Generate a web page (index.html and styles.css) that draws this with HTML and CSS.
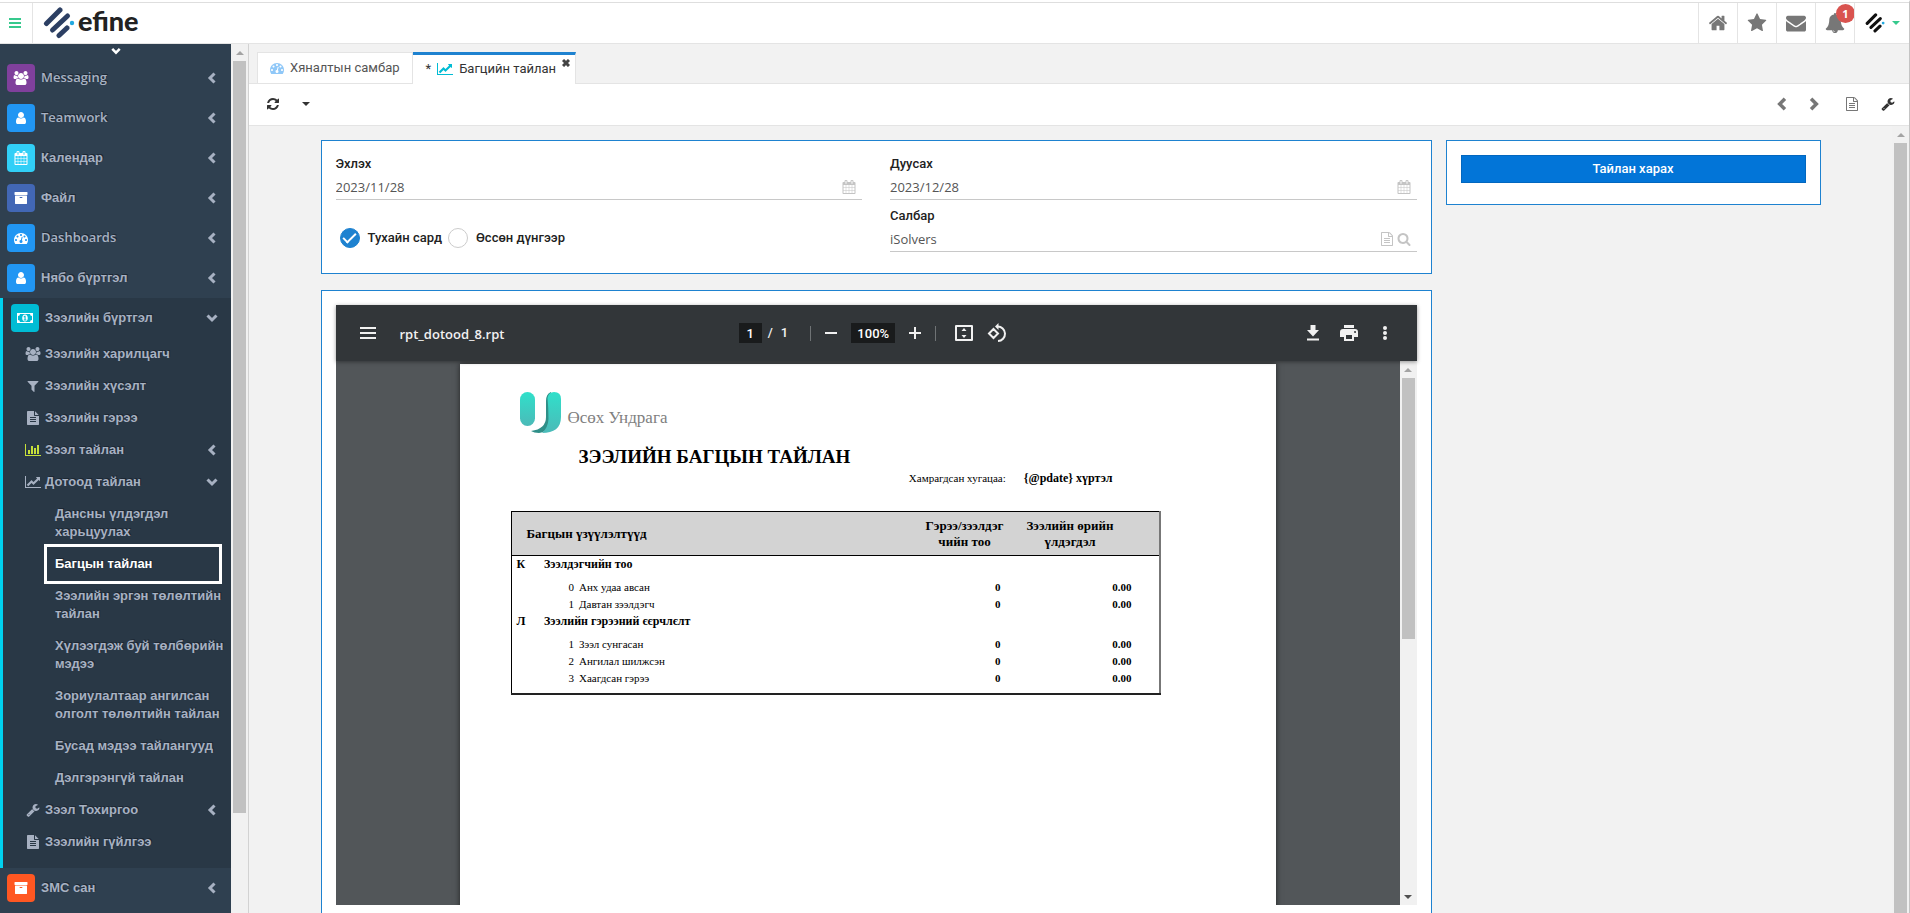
FILE: index.html
```
<!DOCTYPE html>
<html lang="mn">
<head>
<meta charset="utf-8">
<title>efine</title>
<link rel="stylesheet" href="styles.css">
</head>
<body>
<svg class="defs" aria-hidden="true">
  <symbol id="i-users" viewBox="0 0 2048 1792"><path d="M657 896q-162 5-265 128h-134q-82 0-138-40.5t-56-118.5q0-353 124-353 6 0 43.500 21t97.500 42.500 119 21.500q67 0 133-23-5 37-5 66 0 159 90 256zm1071 637q0 120-73 189.500t-194 69.500h-874q-121 0-194-69.500t-73-189.500q0-53 3.500-103.500t14-109 26.500-108.500 43-97.500 62-81 85.500-53.500 111.500-20q10 0 43 21.500t73 48 107 48 135 21.500 135-21.500 107-48 73-48 43-21.500q61 0 111.500 20t85.500 53.500 62 81 43 97.500 26.500 108.500 14 109 3.500 103.500zm-1024-1277q0 106-75 181t-181 75-181-75-75-181 75-181 181-75 181 75 75 181zm704 384q0 159-112.500 271.500t-271.500 112.500-271.500-112.500-112.500-271.500 112.500-271.500 271.500-112.500 271.500 112.500 112.500 271.500zm576 225q0 78-56 118.500t-138 40.500h-134q-103-123-265-128 90-97 90-256 0-29-5-66 66 23 133 23 59 0 119-21.500t97.500-42.500 43.500-21q124 0 124 353zm-128-609q0 106-75 181t-181 75-181-75-75-181 75-181 181-75 181 75 75 181z"/></symbol>
  <symbol id="i-user" viewBox="0 0 1792 1792"><path d="M1536 1399q0 109-62.500 187t-150.500 78h-854q-88 0-150.500-78t-62.500-187q0-85 8.500-160.500t31.500-152 58.500-131 94-89 134.500-34.500q131 128 313 128t313-128q76 0 134.500 34.500t94 89 58.500 131 31.500 152 8.500 160.500zm-256-887q0 159-112.500 271.500t-271.500 112.500-271.500-112.500-112.500-271.500 112.500-271.500 271.500-112.500 271.500 112.500 112.500 271.500z"/></symbol>
  <symbol id="i-calendar" viewBox="0 0 1792 1792"><path d="M192 1664h288v-288h-288v288zm352 0h320v-288h-320v288zm-352-352h288v-320h-288v320zm352 0h320v-320h-320v320zm-352-384h288v-288h-288v288zm736 736h320v-288h-320v288zm-384-736h320v-288h-320v288zm768 736h288v-288h-288v288zm-384-352h320v-320h-320v320zm-352-864v-288q0-13-9.500-22.500t-22.500-9.500h-64q-13 0-22.500 9.500t-9.500 22.500v288q0 13 9.500 22.500t22.500 9.500h64q13 0 22.500-9.500t9.500-22.500zm736 864h288v-320h-288v320zm-384-384h320v-288h-320v288zm384 0h288v-288h-288v288zm32-480v-288q0-13-9.500-22.500t-22.500-9.500h-64q-13 0-22.500 9.500t-9.500 22.500v288q0 13 9.500 22.500t22.500 9.500h64q13 0 22.500-9.500t9.500-22.500zm384-64v1280q0 52-38 90t-90 38h-1408q-52 0-90-38t-38-90v-1280q0-52 38-90t90-38h128v-96q0-66 47-113t113-47h64q66 0 113 47t47 113v96h384v-96q0-66 47-113t113-47h64q66 0 113 47t47 113v96h128q52 0 90 38t38 90z"/></symbol>
  <symbol id="i-archive" viewBox="0 0 1792 1792"><path d="M1088 832q0-26-19-45t-45-19h-256q-26 0-45 19t-19 45 19 45 45 19h256q26 0 45-19t19-45zm576-192v960q0 26-19 45t-45 19h-1408q-26 0-45-19t-19-45v-960q0-26 19-45t45-19h1408q26 0 45 19t19 45zm64-448v256q0 26-19 45t-45 19h-1536q-26 0-45-19t-19-45v-256q0-26 19-45t45-19h1536q26 0 45 19t19 45z"/></symbol>
  <symbol id="i-dash" viewBox="0 0 1792 1792"><path d="M384 1152q0-53-37.500-90.500t-90.500-37.500-90.500 37.500-37.500 90.500 37.500 90.500 90.500 37.500 90.500-37.500 37.500-90.500zm192-448q0-53-37.500-90.500t-90.500-37.500-90.500 37.500-37.500 90.500 37.500 90.500 90.500 37.500 90.500-37.500 37.500-90.500zm428 481l101-382q6-26-7.500-48.500t-38.500-29.500-48 6.500-30 39.500l-101 382q-60 5-107 43.500t-63 98.500q-20 77 20 146t117 89 146-20 89-117q16-60-6-117t-72-91zm660-33q0-53-37.500-90.500t-90.500-37.500-90.500 37.500-37.500 90.500 37.500 90.500 90.500 37.500 90.500-37.500 37.500-90.500zm-640-640q0-53-37.500-90.500t-90.500-37.500-90.500 37.500-37.500 90.500 37.500 90.500 90.500 37.500 90.500-37.500 37.500-90.500zm448 192q0-53-37.500-90.500t-90.500-37.500-90.500 37.500-37.500 90.500 37.500 90.500 90.500 37.500 90.500-37.500 37.500-90.500zm320 448q0 261-141 483-19 29-54 29h-1402q-35 0-54-29-141-221-141-483 0-182 71-348t191-286 286-191 348-71 348 71 286 191 191 286 71 348z"/></symbol>
  <symbol id="i-money" viewBox="0 0 16 14"><path fill-rule="evenodd" d="M0 2h16v10H0zM3 3a2 2 0 0 1-2 2v4a2 2 0 0 1 2 2h10a2 2 0 0 1 2-2V5a2 2 0 0 1-2-2z"/><path fill-rule="evenodd" d="M8 3.400c1.700 0 2.800 1.500 2.800 3.600s-1.100 3.600-2.800 3.600S5.200 9.100 5.200 7 6.300 3.400 8 3.400zM7.600 4.800 6.500 5.700l.5.700.5-.3v2.400h-.8v.9h2.700v-.9h-.8V4.800z"/></symbol>
  <symbol id="i-filter" viewBox="0 0 1792 1792"><path d="M1595 295q17 41-14 70l-493 493v742q0 42-39 59-13 5-25 5-27 0-45-19l-256-256q-19-19-19-45v-486l-493-493q-31-29-14-70 17-39 59-39h1280q42 0 59 39z"/></symbol>
  <symbol id="i-file" viewBox="0 0 1792 1792"><path d="M1596 476q14 14 28 36h-472v-472q22 14 36 28zm-476 164h544v1056q0 40-28 68t-68 28h-1344q-40 0-68-28t-28-68v-1600q0-40 28-68t68-28h800v544q0 40 28 68t68 28zm160 736v-64q0-14-9-23t-23-9h-704q-14 0-23 9t-9 23v64q0 14 9 23t23 9h704q14 0 23-9t9-23zm0-256v-64q0-14-9-23t-23-9h-704q-14 0-23 9t-9 23v64q0 14 9 23t23 9h704q14 0 23-9t9-23zm0-256v-64q0-14-9-23t-23-9h-704q-14 0-23 9t-9 23v64q0 14 9 23t23 9h704q14 0 23-9t9-23z"/></symbol>
  <symbol id="i-file-o" viewBox="0 0 1792 1792"><path d="M1596 380q28 28 48 76t20 88v1152q0 40-28 68t-68 28h-1344q-40 0-68-28t-28-68v-1600q0-40 28-68t68-28h896q40 0 88 20t76 48zm-444-244v376h376q-10-29-22-41l-313-313q-12-12-41-22zm384 1528v-1024h-416q-40 0-68-28t-28-68v-416h-768v1536h1280zm-1024-864q0-14 9-23t23-9h704q14 0 23 9t9 23v64q0 14-9 23t-23 9h-704q-14 0-23-9t-9-23v-64zm736 224q14 0 23 9t9 23v64q0 14-9 23t-23 9h-704q-14 0-23-9t-9-23v-64q0-14 9-23t23-9h704zm0 256q14 0 23 9t9 23v64q0 14-9 23t-23 9h-704q-14 0-23-9t-9-23v-64q0-14 9-23t23-9h704z"/></symbol>
  <symbol id="i-bars" viewBox="0 0 2048 1792"><path d="M640 896v512h-256v-512h256zm384-512v1024h-256v-1024h256zm1024 1152v128h-2048v-1536h128v1408h1920zm-640-896v768h-256v-768h256zm384-384v1152h-256v-1152h256z"/></symbol>
  <symbol id="i-line" viewBox="0 0 2048 1792"><path d="M2048 1536v128h-2048v-1536h128v1408h1920zm-128-1248v435q0 21-19.500 29.500t-35.500-7.500l-121-121-633 633q-10 10-23 10t-23-10l-233-233-416 416-192-192 585-585q10-10 23-10t23 10l233 233 464-464-121-121q-16-16-7.500-35.500t29.500-19.500h435q14 0 23 9t9 23z"/></symbol>
  <symbol id="i-wrench" viewBox="0 0 1792 1792"><path d="M448 1472q0-26-19-45t-45-19-45 19-19 45 19 45 45 19 45-19 19-45zm644-420l-682 682q-37 37-90 37-52 0-91-37l-106-108q-38-36-38-90 0-53 38-91l681-681q39 98 114.500 173.500t173.500 114.500zm634-435q0 39-23 106-47 134-164.500 217.500t-258.500 83.500q-185 0-316.500-131.500t-131.500-316.500 131.500-316.500 316.500-131.500q58 0 121.500 16.500t107.500 46.500q16 11 16 28t-16 28l-293 169v224l193 107q5-3 79-48.500t135.500-81 70.500-35.500q15 0 23.500 10t8.500 25z"/></symbol>
  <symbol id="i-refresh" viewBox="0 0 1792 1792"><path d="M1639 1056q0 5-1 7-64 268-268 434.500t-478 166.500q-146 0-282.500-55t-243.500-157l-129 129q-19 19-45 19t-45-19-19-45v-448q0-26 19-45t45-19h448q26 0 45 19t19 45-19 45l-137 137q71 66 161 102t187 36q134 0 250-65t186-179q11-17 53-117 8-23 30-23h192q13 0 22.500 9.500t9.500 22.500zm25-800v448q0 26-19 45t-45 19h-448q-26 0-45-19t-19-45 19-45l138-138q-148-137-349-137-134 0-250 65t-186 179q-11 17-53 117-8 23-30 23h-199q-13 0-22.500-9.500t-9.500-22.500v-7q65-268 270-434.500t480-166.500q146 0 284 55.500t245 156.500l130-129q19-19 45-19t45 19 19 45z"/></symbol>
  <symbol id="i-home" viewBox="0 0 1792 1792"><path d="M1472 992v480q0 26-19 45t-45 19h-384v-384h-256v384h-384q-26 0-45-19t-19-45v-480q0-1 .5-3t.5-3l575-474 575 474q1 2 1 6zm223-69l-62 74q-8 9-21 11h-3q-13 0-21-7l-692-577-692 577q-12 8-24 7-13-2-21-11l-62-74q-8-10-7-23.500t11-21.500l719-599q32-26 76-26t76 26l244 204v-195q0-14 9-23t23-9h192q14 0 23 9t9 23v408l219 182q10 8 11 21.500t-7 23.500z"/></symbol>
  <symbol id="i-star" viewBox="0 0 1792 1792"><path d="M1728 647q0 22-26 48l-363 354 86 500q1 7 1 20 0 21-10.500 35.500t-30.500 14.500q-19 0-40-12l-449-236-449 236q-22 12-40 12-21 0-31.500-14.500t-10.500-35.500q0-6 2-20l86-500-364-354q-25-27-25-48 0-37 56-46l502-73 225-455q19-41 49-41t49 41l225 455 502 73q56 9 56 46z"/></symbol>
  <symbol id="i-mail" viewBox="0 0 1792 1792"><path d="M1792 710v794q0 66-47 113t-113 47h-1472q-66 0-113-47t-47-113v-794q44 49 101 87 362 246 497 345 57 42 92.500 65.500t94.500 48 110 24.500h2q51 0 110-24.500t94.500-48 92.500-65.500q170-123 498-345 57-39 100-87zm0-294q0 79-49 151t-122 123q-376 261-468 325-10 7-42.500 31t-54 38.500-52 32.500-57.500 27-50 9h-2q-23 0-50-9t-57.500-27-52-32.500-54-38.500-42.500-31q-91-64-262-182.500t-205-142.500q-62-42-117-115.500t-55-136.500q0-78 41.500-130t118.500-52h1472q65 0 112.500 47t47.500 113z"/></symbol>
  <symbol id="i-bell" viewBox="0 0 1792 1792"><path d="M912 1696q0-16-16-16-59 0-101.500-42.500t-42.500-101.500q0-16-16-16t-16 16q0 73 51.500 124.500t124.500 51.500q16 0 16-16zm816-288q0 52-38 90t-90 38h-448q0 106-75 181t-181 75-181-75-75-181h-448q-52 0-90-38t-38-90q50-42 91-88t85-119.500 74.500-158.500 50-206 19.500-260q0-152 117-282.500t307-158.500q-8-19-8-39 0-40 28-68t68-28 68 28 28 68q0 20-8 39 190 28 307 158.500t117 282.500q0 139 19.500 260t50 206 74.500 158.500 85 119.500 91 88z"/></symbol>
  <symbol id="i-search" viewBox="0 0 1792 1792"><path d="M1216 832q0-185-131.500-316.500t-316.500-131.500-316.500 131.500-131.500 316.500 131.500 316.500 316.500 131.500 316.500-131.500 131.500-316.500zm512 832q0 52-38 90t-90 38q-54 0-90-38l-343-342q-179 124-399 124-143 0-273.500-55.500t-225-150-150-225-55.500-273.500 55.500-273.500 150-225 225-150 273.500-55.500 273.500 55.500 225 150 150 225 55.500 273.500q0 220-124 399l343 343q37 37 37 90z"/></symbol>
  <symbol id="i-left" viewBox="0 0 12 12"><path class="chev" d="M8.500 1.500 4 6l4.500 4.500"/></symbol>
  <symbol id="i-right" viewBox="0 0 12 12"><path class="chev" d="M3.500 1.500 8 6l-4.500 4.500"/></symbol>
  <symbol id="i-down" viewBox="0 0 12 12"><path class="chev" d="M1.500 3.500 6 8l4.500-4.500"/></symbol>
  <symbol id="i-caret" viewBox="0 0 8 4"><path d="M0 0h8L4 4z"/></symbol>
  <symbol id="i-up-tri" viewBox="0 0 8 4"><path d="M0 4h8L4 0z"/></symbol>
  <symbol id="i-mark" viewBox="0 0 32 32"><g class="mark-bars"><path d="M3.500 16.500 17 3"/><path d="M9.500 23 24.500 9"/><path d="M16 28.500 24 21"/></g><circle class="mark-dot" cx="29" cy="16" r="2.200"/></symbol>
</svg>

<div class="app">
  <header class="topbar">
    <button class="menu-btn" aria-label="Menu"><svg viewBox="0 0 12 10"><path d="M0 0h12v2H0zM0 4h12v2H0zM0 8h12v2H0z"/></svg></button>
    <a class="brand" href="#"><svg class="brand-mark"><use href="#i-mark"/></svg><span>efine</span></a>
    <nav class="top-actions">
      <a href="#" aria-label="Home"><svg class="ic20"><use href="#i-home"/></svg></a>
      <a href="#" aria-label="Favorites"><svg class="ic20"><use href="#i-star"/></svg></a>
      <a href="#" aria-label="Mail"><svg class="ic20"><use href="#i-mail"/></svg></a>
      <a href="#" aria-label="Notifications"><svg class="ic20"><use href="#i-bell"/></svg><span class="badge">1</span></a>
      <a href="#" class="profile" aria-label="Profile"><svg class="ic20 dark-mark"><use href="#i-mark"/></svg><svg class="caret"><use href="#i-caret"/></svg></a>
    </nav>
  </header>

  <div class="body">
    <aside class="sidebar">
      <button class="scroll-more" aria-label="More"><svg class="ic10"><use href="#i-down"/></svg></button>
      <a class="item latin" href="#"><span class="tile purple"><svg class="ic16"><use href="#i-users"/></svg></span><span class="label">Messaging</span><svg class="ic12"><use href="#i-left"/></svg></a>
      <a class="item latin" href="#"><span class="tile blue"><svg class="ic14"><use href="#i-user"/></svg></span><span class="label">Teamwork</span><svg class="ic12"><use href="#i-left"/></svg></a>
      <a class="item" href="#"><span class="tile cyan"><svg class="ic16"><use href="#i-calendar"/></svg></span><span class="label">Календар</span><svg class="ic12"><use href="#i-left"/></svg></a>
      <a class="item" href="#"><span class="tile indigo"><svg class="ic14"><use href="#i-archive"/></svg></span><span class="label">Файл</span><svg class="ic12"><use href="#i-left"/></svg></a>
      <a class="item latin" href="#"><span class="tile blue"><svg class="ic14"><use href="#i-dash"/></svg></span><span class="label">Dashboards</span><svg class="ic12"><use href="#i-left"/></svg></a>
      <a class="item" href="#"><span class="tile blue"><svg class="ic14"><use href="#i-user"/></svg></span><span class="label">Нябо бүртгэл</span><svg class="ic12"><use href="#i-left"/></svg></a>
      <div class="group">
        <a class="item" href="#"><span class="tile teal"><svg class="ic16"><use href="#i-money"/></svg></span><span class="label">Зээлийн бүртгэл</span><svg class="ic12"><use href="#i-down"/></svg></a>
        <a class="sub" href="#"><svg class="ic16"><use href="#i-users"/></svg><span class="label">Зээлийн харилцагч</span></a>
        <a class="sub" href="#"><svg class="ic16"><use href="#i-filter"/></svg><span class="label">Зээлийн хүсэлт</span></a>
        <a class="sub" href="#"><svg class="ic14"><use href="#i-file"/></svg><span class="label">Зээлийн гэрээ</span></a>
        <a class="sub" href="#"><svg class="ic16 lime"><use href="#i-bars"/></svg><span class="label">Зээл тайлан</span><svg class="ic12"><use href="#i-left"/></svg></a>
        <a class="sub" href="#"><svg class="ic16"><use href="#i-line"/></svg><span class="label">Дотоод тайлан</span><svg class="ic12"><use href="#i-down"/></svg></a>
        <a class="leaf" href="#">Дансны үлдэгдэл<br>харьцуулах</a>
        <a class="leaf current" href="#">Багцын тайлан</a>
        <a class="leaf" href="#">Зээлийн эргэн төлөлтийн<br>тайлан</a>
        <a class="leaf" href="#">Хүлээгдэж буй төлбөрийн<br>мэдээ</a>
        <a class="leaf" href="#">Зориулалтаар ангилсан<br>олголт төлөлтийн тайлан</a>
        <a class="leaf" href="#">Бусад мэдээ тайлангууд</a>
        <a class="leaf" href="#">Дэлгэрэнгүй тайлан</a>
        <a class="sub" href="#"><svg class="ic14"><use href="#i-wrench"/></svg><span class="label">Зээл Тохиргоо</span><svg class="ic12"><use href="#i-left"/></svg></a>
        <a class="sub" href="#"><svg class="ic14"><use href="#i-file"/></svg><span class="label">Зээлийн гүйлгээ</span></a>
      </div>
      <a class="item" href="#"><span class="tile orange"><svg class="ic14"><use href="#i-archive"/></svg></span><span class="label">ЗМС сан</span><svg class="ic12"><use href="#i-left"/></svg></a>
    </aside>
    <div class="sbar"><svg><use href="#i-up-tri"/></svg><div class="thumb side-thumb"></div></div>

    <main class="main">
      <div class="tabs">
        <a class="tab" href="#"><svg class="ic14 sky"><use href="#i-dash"/></svg>Хяналтын самбар</a>
        <a class="tab active" href="#"><span>*</span><svg class="ic16 aqua"><use href="#i-line"/></svg>Багцийн тайлан<svg class="close" viewBox="0 0 8 8"><path d="M1 1l6 6M7 1l-6 6"/></svg></a>
      </div>
      <div class="toolbar">
        <button aria-label="Refresh"><svg class="ic14"><use href="#i-refresh"/></svg></button>
        <button aria-label="Options"><svg class="caret"><use href="#i-caret"/></svg></button>
        <span class="grow"></span>
        <button class="muted" aria-label="Previous"><svg class="ic14"><use href="#i-left"/></svg></button>
        <button class="muted" aria-label="Next"><svg class="ic14"><use href="#i-right"/></svg></button>
        <button class="muted doc" aria-label="Document"><svg class="ic14"><use href="#i-file-o"/></svg></button>
        <button aria-label="Settings"><svg class="ic14"><use href="#i-wrench"/></svg></button>
      </div>
      <div class="content">
        <div class="scroll">
          <div class="grid">
            <div class="left">
              <form class="panel filters">
                <div class="col">
                  <div class="field"><label for="from">Эхлэх</label><div class="box"><input id="from" type="text" value="2023/11/28"><svg class="ic14"><use href="#i-calendar"/></svg></div></div>
                  <div class="radios">
                    <label><input type="radio" name="mode" checked>Тухайн сард</label>
                    <label><input type="radio" name="mode">Өссөн дүнгээр</label>
                  </div>
                </div>
                <div class="col">
                  <div class="field"><label for="to">Дуусах</label><div class="box"><input id="to" type="text" value="2023/12/28"><svg class="ic14"><use href="#i-calendar"/></svg></div></div>
                  <div class="field"><label for="branch">Салбар</label><div class="box"><input id="branch" type="text" value="iSolvers"><svg class="ic14"><use href="#i-file-o"/></svg><svg class="ic14"><use href="#i-search"/></svg></div></div>
                </div>
              </form>
              <section class="panel">
                <div class="viewer">
                  <div class="vbar">
                    <div class="vside">
                      <button aria-label="Sidebar"><svg class="ic16" viewBox="0 0 16 16"><path d="M0 2h16v2H0zM0 7h16v2H0zM0 12h16v2H0z"/></svg></button>
                      <span class="vtitle">rpt_dotood_8.rpt</span>
                    </div>
                    <div class="vmid">
                      <input class="pageno" type="text" value="1" aria-label="Page"><span class="of"><span>/</span><span>1</span></span>
                      <i class="sep"></i>
                      <button aria-label="Zoom out"><svg class="ic12" viewBox="0 0 12 12"><path d="M0 5h12v2H0z"/></svg></button>
                      <input class="zoom" type="text" value="100%" aria-label="Zoom">
                      <button aria-label="Zoom in"><svg class="ic12" viewBox="0 0 12 12"><path d="M0 5h5V0h2v5h5v2H7v5H5V7H0z"/></svg></button>
                      <i class="sep"></i>
                      <button class="fit" aria-label="Fit"><svg class="ic20" viewBox="0 0 20 20"><path fill-rule="evenodd" d="M2 2h16q1 0 1 1v14q0 1-1 1H2q-1 0-1-1V3q0-1 1-1zm1 2v12h14V4z"/><path d="M10 5l2.500 3h-5zM10 15l2.500-3h-5z"/></svg></button>
                      <button aria-label="Rotate"><svg class="ic20" viewBox="0 0 20 20"><path class="line" d="M6.500 6 11 10.500 6.500 15 2 10.500zM10.500 3.500A7.200 7.200 0 1 1 11 18"/><path d="M11.500 0v7L8 3.500z"/></svg></button>
                    </div>
                    <div class="vside end">
                      <button aria-label="Download"><svg class="ic16" viewBox="0 0 16 16"><path d="M5.500 0h5v5H14l-6 6.500L2 5h3.500zM2 13.500h12v2H2z"/></svg></button>
                      <button aria-label="Print"><svg class="ic18" viewBox="0 0 18 18"><path fill-rule="evenodd" d="M4 1h10v3H4zM3 5h12q3 0 3 3v5h-4v4H4v-4H0V8q0-3 3-3zm3 6v4h6v-4zm9-4a1 1 0 1 0 .1 2A1 1 0 0 0 15 7z"/></svg></button>
                      <button aria-label="More"><svg class="ic16" viewBox="0 0 16 16"><circle cx="8" cy="3" r="2"/><circle cx="8" cy="8" r="2"/><circle cx="8" cy="13" r="2"/></svg></button>
                    </div>
                  </div>
                  <div class="vbody">
                    <div class="canvas">
                      <article class="sheet">
                        <div class="company">
                          <svg viewBox="0 0 41 42"><defs><linearGradient id="g" x1="0" y1="0" x2="0" y2="1"><stop offset="0" stop-color="#30e0ca"/><stop offset="1" stop-color="#4bbab8"/></linearGradient></defs><rect width="15" height="34" rx="7.500" fill="url(#g)"/><path d="M26 9q0-7 5-9v25q-2 15-12 16-5 0-8-2 15-2 15-14z" fill="#2f8f88"/><path d="M27.500 6q1-6 6.500-6 7 0 7 7v18c0 11-7 16-19 16q6-5 6.500-14 0-11-1-21z" fill="url(#g)"/></svg>
                          <span>Өсөх Ундрага</span>
                        </div>
                        <h1>ЗЭЭЛИЙН БАГЦЫН ТАЙЛАН</h1>
                        <p class="period"><span>Хамрагдсан хугацаа:</span><b>{@pdate} хүртэл</b></p>
                        <table class="report">
                          <colgroup><col class="c-code"><col class="c-num"><col><col class="c-count"><col class="c-sum"></colgroup>
                          <thead><tr><th class="first" colspan="3">Багцын үзүүлэлтүүд</th><th>Гэрээ/зээлдэг<br>чийн тоо</th><th class="sum">Зээлийн өрийн<br>үлдэгдэл</th></tr></thead>
                          <tbody>
                            <tr class="head"><td>К</td><td colspan="4">Зээлдэгчийн тоо</td></tr>
                            <tr><td></td><td class="n">0</td><td>Анх удаа авсан</td><td>0</td><td>0.00</td></tr>
                            <tr><td></td><td class="n">1</td><td>Давтан зээлдэгч</td><td>0</td><td>0.00</td></tr>
                            <tr class="head"><td>Л</td><td colspan="4">Зээлийн гэрээний єєрчлєлт</td></tr>
                            <tr><td></td><td class="n">1</td><td>Зээл сунгасан</td><td>0</td><td>0.00</td></tr>
                            <tr><td></td><td class="n">2</td><td>Ангилал шилжсэн</td><td>0</td><td>0.00</td></tr>
                            <tr class="last"><td></td><td class="n">3</td><td>Хаагдсан гэрээ</td><td>0</td><td>0.00</td></tr>
                          </tbody>
                        </table>
                      </article>
                    </div>
                    <div class="sbar"><svg><use href="#i-up-tri"/></svg><div class="thumb view-thumb"></div><svg class="dn"><use href="#i-caret"/></svg></div>
                  </div>
                </div>
              </section>
            </div>
            <aside class="panel run"><button>Тайлан харах</button></aside>
          </div>
        </div>
        <div class="sbar"><svg><use href="#i-up-tri"/></svg><div class="thumb main-thumb"></div></div>
      </div>
    </main>
  </div>
</div>
</body>
</html>
```
FILE: styles.css
```
* { box-sizing: border-box; }
body { margin: 0; background: #f2f2f2; font: 13px/18px Roboto, "Liberation Sans", sans-serif; color: #333; }
a { color: inherit; text-decoration: none; }
button { border: 0; padding: 0; background: none; color: inherit; font: inherit; display: inline-flex; align-items: center; justify-content: center; }
input { font: inherit; color: inherit; margin: 0; }
svg { display: block; fill: currentColor; flex: none; }
.defs { position: absolute; width: 0; height: 0; }
.ic10 { width: 10px; height: 10px; }
.ic12 { width: 12px; height: 12px; }
.ic14 { width: 14px; height: 14px; }
.ic16 { width: 16px; height: 14px; }
.ic18 { width: 18px; height: 18px; }
.ic20 { width: 20px; height: 20px; }
.chev { fill: none; stroke: currentColor; stroke-width: 3; }
.line { fill: none; stroke: currentColor; stroke-width: 2; }
.caret { width: 8px; height: 4px; }
.mark-bars { fill: none; stroke: var(--bar, #2c3f63); stroke-width: 5; stroke-linecap: round; }
.mark-dot { fill: #22a9e0; }
.grow { flex: 1; }

.app { height: 100vh; display: flex; flex-direction: column; overflow: hidden; border-right: 1px solid #c4c4c4; border-top: 2px solid #fff; }

.topbar { flex: none; height: 42px; background: #fff; border-top: 1px solid #dedede; border-bottom: 1px solid #e4e4e4; display: flex; align-items: stretch; }
.menu-btn { width: 33px; border-right: 1px solid #e4e4e4; color: #36c98d; padding-right: 3px; }
.menu-btn svg { width: 12px; height: 10px; }
.brand { display: flex; align-items: center; gap: 3px; padding-left: 10px; color: #222; font: 900 27px/36px Lato, sans-serif; }
.brand span { padding-bottom: 4px; }
.brand-mark { width: 32px; height: 32px; }
.top-actions { margin-left: auto; display: flex; color: #777; }
.top-actions a { position: relative; width: 39px; border-left: 1px solid #e4e4e4; display: flex; align-items: center; justify-content: center; }
.top-actions .profile { width: 55px; gap: 7px; color: #36c98d; }
.dark-mark { --bar: #111; }
.badge { position: absolute; left: 20px; top: 1px; width: 19px; height: 19px; border-radius: 10px; background: #d9534f; color: #fff; font: bold 11px/19px "Open Sans", sans-serif; text-align: center; }

.body { flex: 1; min-height: 0; display: flex; }
.sidebar { flex: none; width: 231px; background: #2f4050; color: #a7b1c2; overflow: hidden; font: bold 13px/18px "Liberation Sans", sans-serif; text-shadow: 1px -1px 0 #1c2733; }
.latin { font: 600 13px/18px "Open Sans", sans-serif; }
.latin .label { padding-bottom: 2px; }
.scroll-more { display: flex; width: 100%; height: 14px; color: #fff; }
.item { height: 40px; padding: 0 13px 0 7px; display: flex; align-items: center; gap: 6px; }
.label { flex: 1; }
.tile { width: 28px; height: 28px; border-radius: 4px; color: #fff; display: flex; align-items: center; justify-content: center; }
.purple { background: #80409c; }
.blue { background: #2196f3; }
.cyan { background: #31cff7; }
.indigo { background: #4267b5; }
.teal { background: #00bcd4; }
.orange { background: #ff5722; }
.lime { color: #c6e03a; }
.sky { color: #90c8f8; }
.aqua { color: #00bcd4; }
.group { background: #293846; border-left: 3px solid #00d2f0; padding-bottom: 10px; }
.group .item { padding-left: 8px; }
.sub { height: 32px; padding: 0 13px 0 22px; display: flex; align-items: center; gap: 4px; }
.sub .ic14:first-child { width: 16px; }
.leaf { position: relative; display: block; padding: 7px 0 7px 52px; white-space: nowrap; }
.current { color: #fff; }
.current::after { content: ""; position: absolute; left: 41px; right: 9px; top: -4px; bottom: -4px; border: 3px solid #fff; }

.sbar { flex: none; width: 17px; background: #f1f1f1; display: flex; flex-direction: column; align-items: center; color: #a3a3a3; }
.sbar svg { width: 8px; height: 4px; margin: 7px 0 6px; }
.sbar .dn { color: #505050; margin: auto 0 6px; }
.thumb { width: 13px; background: #c1c1c1; }
.side-thumb { height: 86.5%; }
.main-thumb { flex: 1; }
.view-thumb { height: 48%; }

.main { flex: 1; min-width: 0; border-left: 1px solid #d2d2d2; display: flex; flex-direction: column; }
.tabs { flex: none; height: 40px; padding: 8px 0 0 8px; display: flex; border-bottom: 1px solid #e4e4e4; }
.tab { height: 31px; background: #fff; border: 1px solid #e4e4e4; border-bottom: 0; display: flex; align-items: center; gap: 6px; padding: 0 12px; color: #555; }
.tab.active { height: 32px; border-top: 3px solid #1e82d0; border-left: 0; padding: 0 5px 2px 13px; color: #333; }
.close { width: 8px; height: 8px; margin-bottom: 12px; stroke: #444; stroke-width: 3; fill: none; }
.toolbar { flex: none; height: 42px; padding: 0 14px 2px 17px; background: #fff; border-bottom: 1px solid #e4e4e4; display: flex; align-items: center; gap: 18px; }
.toolbar > button + button { min-width: 14px; }
.toolbar .caret { margin-left: 2px; }
.muted { color: #777; }
.doc { margin: 0 4px 0 6px; }
.content { flex: 1; min-height: 0; display: flex; }
.scroll { flex: 1; min-width: 0; overflow: hidden; padding: 14px 24px; }
.grid { max-width: 1500px; margin: 0 auto; display: grid; grid-template-columns: 3fr 1fr; align-items: start; }
.left { padding-right: 14px; display: flex; flex-direction: column; gap: 16px; min-width: 0; }
.panel { background: #fff; border: 1px solid #1e82d0; padding: 14px; }
.filters { display: grid; grid-template-columns: 1fr 1fr; gap: 28px; }
.field { margin-bottom: 7px; }
.field label, .radios { display: block; font-weight: 500; color: #222; }
.box { height: 27px; border-bottom: 1px solid #c8c8c8; display: flex; align-items: center; gap: 3px; padding: 2px 6px 0 0; color: #c4c4c4; }
.box input { flex: 1; min-width: 0; border: 0; padding: 0; background: none; outline: 0; color: #555; font: 13px/18px "Open Sans", sans-serif; }
.radios { display: flex; gap: 6px; padding: 21px 4px 0; }
.radios label { display: flex; align-items: center; gap: 8px; }
.radios input { appearance: none; width: 20px; height: 20px; border: 1px solid #ccc; border-radius: 10px; display: grid; place-items: center; }
.radios input:checked { background: #1e82d0; border-color: #1e82d0; }
.radios input:checked::after { content: ""; width: 11px; height: 5px; border: solid #fff; border-width: 0 0 2px 2px; transform: rotate(-45deg); margin-bottom: 3px; }
.run { padding-bottom: 21px; }
.run button { width: 100%; height: 28px; background: #0275d8; border: 1px solid #0267bf; color: #fff; font-weight: 500; }

.viewer { height: 600px; display: flex; flex-direction: column; background: #525659; }
.vbar { position: relative; flex: none; height: 56px; padding: 0 24px; background: #323639; color: #f1f1f1; display: grid; grid-template-columns: 1fr auto 1fr; align-items: center; box-shadow: 0 1px 4px rgba(0, 0, 0, .4); }
.vside { display: flex; align-items: center; gap: 24px; }
.end { justify-content: flex-end; gap: 19px; }
.vside .ic16 { height: 16px; }
.vtitle { font: 600 13px/18px "Open Sans", sans-serif; padding-top: 2px; }
.vmid { display: flex; align-items: center; gap: 14px; padding-right: 6px; font-weight: 500; }
.vmid input { height: 20px; padding: 0; border: 0; background: #191b1c; color: #fff; text-align: center; }
.pageno { width: 23px; }
.zoom { width: 44px; }
.of { display: flex; gap: 8px; margin-left: -8px; margin-right: 8px; }
.sep { width: 1px; height: 15px; background: #6f7375; }
.vmid .fit { margin-left: 4px; margin-right: -1px; }
.vbody { flex: 1; min-height: 0; display: flex; }
.canvas { flex: 1; min-width: 0; overflow: hidden; padding-top: 3px; display: flex; justify-content: center; }
.sheet { width: 816px; max-width: 100%; height: 1056px; background: #fff; box-shadow: 0 0 6px rgba(0, 0, 0, .6); padding: 28px 115px 0 51px; color: #000; font: 11px/17px "Liberation Serif", serif; }
.company { display: flex; align-items: center; gap: 7px; padding-left: 9px; color: #808080; font-size: 17px; }
.company svg { width: 41px; height: 42px; }
.company span { padding-top: 9px; }
.sheet h1 { margin: 11px 0 0 68px; font-size: 19px; line-height: 24px; }
.period { margin: 1px 0 24px; padding-right: 48px; display: flex; justify-content: flex-end; gap: 18px; }
.period b { font-size: 12px; }
.report { width: 100%; border-collapse: collapse; table-layout: fixed; border: 1px solid #000; border-right: 2px solid #777; border-bottom: 2px solid #222; }
.report th { height: 44px; background: #d3d3d3; border-bottom: 1px solid #000; font-size: 13px; line-height: 16px; padding: 0; }
.report .first { text-align: left; padding-left: 15px; }
.report .sum { padding-right: 28px; }
.report td { padding: 0; white-space: nowrap; }
.report td:first-child { padding-left: 5px; }
.report .n { text-align: right; padding-right: 5px; }
.report td:nth-child(n+4) { font-weight: bold; text-align: right; }
.report td:nth-child(4) { padding-right: 9px; }
.report td:nth-child(5) { padding-right: 27px; }
.report .head td { font-size: 12px; font-weight: bold; padding-bottom: 6px; }
.last td { padding-bottom: 6px; }
.c-code { width: 33px; }
.c-num { width: 35px; }
.c-count { width: 90px; }
.c-sum { width: 150px; }
```
